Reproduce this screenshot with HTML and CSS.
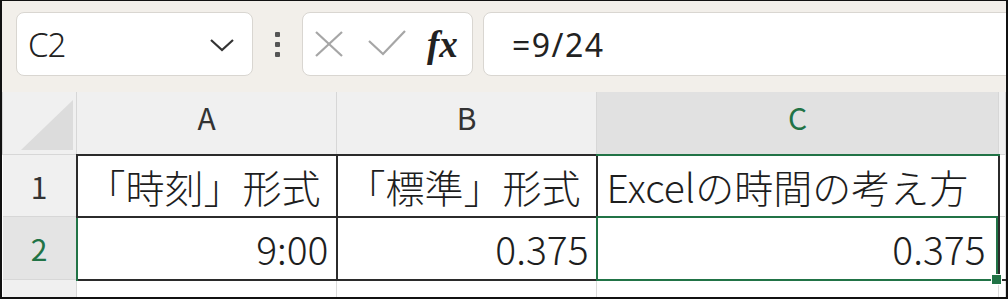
FILE: index.html
```html
<!DOCTYPE html>
<html lang="ja">
<head>
    <meta charset="UTF-8">
    <meta name="viewport" content="width=device-width, initial-scale=1.0">
    <link rel="stylesheet" href="styles.css">
</head>
<body>
    <div class="frame">
        <div class="toolbar">
            <div class="namebox">
                <span class="cellref">C2</span>
                <svg class="chevron" width="24" height="14" viewBox="0 0 24 14">
                    <polyline points="1,2 12,12 23,2" fill="none" stroke="#333" stroke-width="2.2"/>
                </svg>
            </div>
            <div class="dots"><span></span><span></span><span></span></div>
            <div class="fxbox">
                <svg class="icon-x" width="28" height="26" viewBox="0 0 28 26">
                    <line x1="1" y1="1" x2="27" y2="25" stroke="#a6a6a6" stroke-width="2.2"/>
                    <line x1="27" y1="1" x2="1" y2="25" stroke="#a6a6a6" stroke-width="2.2"/>
                </svg>
                <svg class="icon-check" width="38" height="26" viewBox="0 0 38 26">
                    <polyline points="1,11 15,24 37,1" fill="none" stroke="#a6a6a6" stroke-width="2.2"/>
                </svg>
                <span class="fx">fx</span>
            </div>
            <div class="formula">=9/24</div>
        </div>

        <table class="sheet">
            <colgroup>
                <col style="width: 74px">
                <col style="width: 260px">
                <col style="width: 260px">
                <col style="width: 402px">
                <col>
            </colgroup>
            <tr class="colheads">
                <th class="corner">
                    <svg width="74" height="62" viewBox="0 0 74 62">
                        <polygon points="70,8 70,58 18,58" fill="#dcdcdc"/>
                    </svg>
                </th>
                <th>A</th>
                <th>B</th>
                <th class="sel-col">C</th>
                <th></th>
            </tr>
            <tr class="row1">
                <th class="rowhead">1</th>
                <td class="text-r">「時刻」形式</td>
                <td class="text-r">「標準」形式</td>
                <td class="text-l">Excelの時間の考え方</td>
                <td class="blank"></td>
            </tr>
            <tr class="row2">
                <th class="rowhead sel-row">2</th>
                <td class="num">9:00</td>
                <td class="num">0.375</td>
                <td class="num active">0.375<div class="selection"><span class="handle"></span></div></td>
                <td class="blank"></td>
            </tr>
            <tr class="row3">
                <th class="rowhead"></th>
                <td class="blank"></td>
                <td class="blank"></td>
                <td class="blank"></td>
                <td class="blank"></td>
            </tr>
        </table>
    </div>
</body>
</html>
```

FILE: styles.css
```css
body { margin: 0; font-family: "Noto Sans CJK JP", "Noto Sans", sans-serif; }
.frame {
    width: 1008px;
    height: 299px;
    box-sizing: border-box;
    border: 2px solid #111;
    border-top-width: 1px;
    overflow: hidden;
    background: #fff;
}

/* formula bar */
.toolbar {
    height: 91px;
    box-sizing: border-box;
    padding: 11px 0 0 14px;
    background: #f2efea;
    display: flex;
    align-items: flex-start;
}
.namebox, .fxbox, .formula {
    height: 64px;
    box-sizing: border-box;
    background: #fff;
    border: 1px solid #d9d6d1;
    border-radius: 8px;
    display: flex;
    align-items: center;
}
.namebox {
    width: 237px;
    padding: 0 18px 0 11px;
    justify-content: space-between;
}
.cellref {
    font-family: "Noto Sans", sans-serif;
    font-weight: 300;
    font-size: 33px;
    color: #222;
    letter-spacing: -1px;
}
.chevron { margin-top: 2px; }
.dots {
    width: 49px;
    display: flex;
    flex-direction: column;
    align-items: center;
    gap: 5px;
    padding-top: 20px;
}
.dots span {
    width: 5px;
    height: 5px;
    border-radius: 1px;
    background: #555;
}
.fxbox {
    width: 171px;
    padding-left: 12px;
    gap: 25px;
}
.icon-check { margin-top: -2px; }
.fx {
    font-family: "Liberation Serif", serif;
    font-style: italic;
    font-weight: bold;
    font-size: 37px;
    color: #222;
    margin-left: -4px;
}
.formula {
    flex: 1;
    margin-left: 10px;
    margin-right: -20px;
    padding-left: 28px;
    font-family: "Noto Sans", sans-serif;
    font-size: 32px;
    letter-spacing: 1.5px;
    color: #222;
}

/* grid */
.sheet {
    border-collapse: collapse;
    table-layout: fixed;
    width: 1004px;
}
.sheet th {
    background: #f0f0f0;
    border: 1px solid #d7d7d7;
    font-weight: normal;
    font-size: 30px;
    color: #333;
    padding: 0;
    text-align: center;
}
.colheads th {
    height: 62px;
    border-top: none;
    padding-bottom: 12px;
    box-sizing: border-box;
}
.corner { vertical-align: top; line-height: 0; padding-bottom: 0 !important; }
.sel-col {
    background: #e1e1e1 !important;
    color: #217346 !important;
    border-bottom: 2px solid #217346 !important;
}
.rowhead { border-left: none !important; }
.sel-row {
    background: #e4e4e4 !important;
    color: #217346 !important;
    border-right: 2px solid #217346 !important;
}
.sheet td {
    border: 2px solid #2b2b2b;
    font-size: 39px;
    font-weight: 300;
    color: #1e1e1e;
    padding: 0 7px 0 9px;
    white-space: nowrap;
    overflow: visible;
}
.row1 th, .row1 td { height: 60px; }
.row2 th, .row2 td { height: 61px; }
.row3 th, .row3 td { height: 16px; }
.sheet td.blank { border: 1px solid #dcdcdc; }
.row2 td.blank { border-bottom-color: #2b2b2b; }
.row3 td.blank { border-top: 2px solid #2b2b2b; }
.sheet td.text-r { text-align: right; padding-right: 16px; }
.text-l { text-align: left; }
.num { text-align: right; }
.num.active { padding-right: 12px; }
.active { position: relative; }
.selection {
    position: absolute;
    top: -2px;
    left: -2px;
    right: 0;
    bottom: -2px;
    border: 2px solid #217346;
}
.handle {
    position: absolute;
    right: -6px;
    bottom: -6px;
    width: 9px;
    height: 9px;
    background: #217346;
    border: 1px solid #fff;
}
```
